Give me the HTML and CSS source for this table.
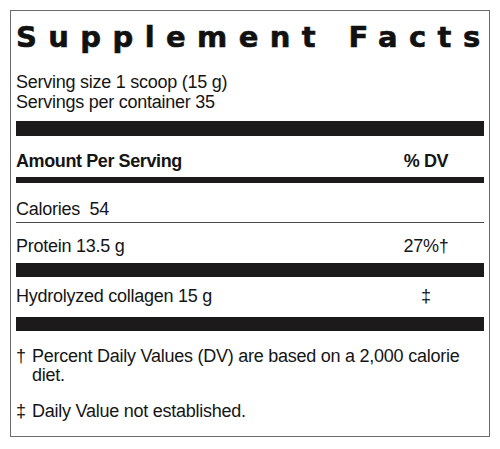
FILE: index.html
```html
<!doctype html>
<html>
	<head>
		<title>Supplement Facts</title>
		<meta charset="utf-8">
		<link rel="stylesheet" href="styles.css">
	</head>
	<body>
		<div class="label">
			<h1 class="title">Supplement Facts</h1>

			<div class="serving">
				<p>Serving size 1 scoop (15 g)</p>
				<p>Servings per container 35</p>
			</div>

			<div class="bar thick bar1"></div>

			<div class="row head">
				<span class="name">Amount Per Serving</span>
				<span class="dv">% DV</span>
			</div>

			<div class="bar medium"></div>

			<div class="row calories">
				<span class="name">Calories&nbsp; 54</span>
			</div>

			<div class="rule"></div>

			<div class="row protein">
				<span class="name">Protein 13.5 g</span>
				<span class="dv">27%†</span>
			</div>

			<div class="bar thick bar3"></div>

			<div class="row collagen">
				<span class="name">Hydrolyzed collagen 15 g</span>
				<span class="dv">‡</span>
			</div>

			<div class="bar thick bar4"></div>

			<div class="note first">
				<span class="mark">†</span>
				<span class="text">Percent Daily Values (DV) are based on a 2,000 calorie diet.</span>
			</div>
			<div class="note second">
				<span class="mark">‡</span>
				<span class="text">Daily Value not established.</span>
			</div>
		</div>
	</body>
</html>
```

FILE: styles.css
```css
body{
	margin:0px;
	padding:0px;
	background:#fff;
}

/** outer box with grey hairline border **/
.label{
	box-sizing:border-box;
	width:480px;
	height:427px;
	margin:10px 0 0 10px;
	padding:9px 5px 0 5px;
	border:1px solid #6b6b6b;
	font-family:"Liberation Sans", Arial, sans-serif;
	font-size:18px;
	letter-spacing:-0.25px;
	color:#151515;
}

.title{
	margin:0;
	font-family:"DejaVu Sans", sans-serif;
	font-weight:bold;
	font-size:29px;
	line-height:34px;
	letter-spacing:11.4px;
	-webkit-text-stroke:0.6px #111;
	color:#111;
	white-space:nowrap;
}

.serving{
	margin-top:18px;
}
.serving p{
	margin:0;
	line-height:20px;
}

/** black separator bars **/
.bar{
	background:#1c1a1b;
}
.thick{
	height:15px;
}
.bar1{
	margin-top:9px;
}
.medium{
	height:6px;
	margin-top:6px;
}
.bar3{
	height:14px;
	margin-top:7px;
}
.bar4{
	height:14px;
	margin-top:11px;
}

.rule{
	height:1px;
	margin-top:3px;
	background:#4a4a4a;
}

/** name left, % DV in a centred column on the right **/
.row{
	display:grid;
	grid-template-columns:1fr 70px;
	padding-right:23px;
	line-height:20px;
}
.row .dv{
	text-align:center;
}
.head{
	margin-top:15px;
	font-weight:bold;
	letter-spacing:-0.4px;
}
.calories{
	margin-top:16px;
}
.protein{
	margin-top:13px;
}
.collagen{
	margin-top:9px;
}

/** footnotes with hanging symbol **/
.note{
	display:flex;
	line-height:19px;
}
.note .mark{
	flex:0 0 16px;
}
.note .text{
	flex:1;
	padding-right:20px;
}
.first{
	margin-top:16px;
}
.second{
	margin-top:17px;
}
```
